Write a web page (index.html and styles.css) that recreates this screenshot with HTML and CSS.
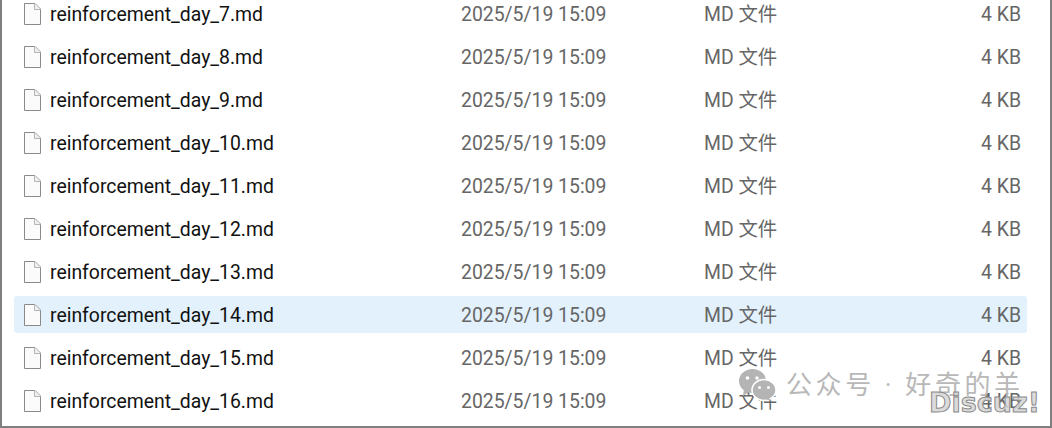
FILE: index.html
```html
<!DOCTYPE html>
<html lang="zh-CN">
<head>
  <meta charset="UTF-8">
  <title>文件列表</title>
  <link rel="stylesheet" href="styles.css">
</head>
<body>
  <div class="window">
    <div class="list">
      <div class="row">
        <svg class="file-icon" viewBox="0 0 18 22"><path d="M1.5 .5H12L17.500 6V21.500H1.500Z" fill="#fbfbfb" stroke="#8a8a8a"/><path d="M11.500 .5V6.500H17.500" fill="#f0f0f0" stroke="#b5b5b5"/></svg>
        <div class="cell name">reinforcement_day_7.md</div>
        <div class="cell date">2025/5/19 15:09</div>
        <div class="cell type">MD 文件</div>
        <div class="cell size">4 KB</div>
      </div>
      <div class="row">
        <svg class="file-icon" viewBox="0 0 18 22"><path d="M1.5 .5H12L17.500 6V21.500H1.500Z" fill="#fbfbfb" stroke="#8a8a8a"/><path d="M11.500 .5V6.500H17.500" fill="#f0f0f0" stroke="#b5b5b5"/></svg>
        <div class="cell name">reinforcement_day_8.md</div>
        <div class="cell date">2025/5/19 15:09</div>
        <div class="cell type">MD 文件</div>
        <div class="cell size">4 KB</div>
      </div>
      <div class="row">
        <svg class="file-icon" viewBox="0 0 18 22"><path d="M1.5 .5H12L17.500 6V21.500H1.500Z" fill="#fbfbfb" stroke="#8a8a8a"/><path d="M11.500 .5V6.500H17.500" fill="#f0f0f0" stroke="#b5b5b5"/></svg>
        <div class="cell name">reinforcement_day_9.md</div>
        <div class="cell date">2025/5/19 15:09</div>
        <div class="cell type">MD 文件</div>
        <div class="cell size">4 KB</div>
      </div>
      <div class="row">
        <svg class="file-icon" viewBox="0 0 18 22"><path d="M1.5 .5H12L17.500 6V21.500H1.500Z" fill="#fbfbfb" stroke="#8a8a8a"/><path d="M11.500 .5V6.500H17.500" fill="#f0f0f0" stroke="#b5b5b5"/></svg>
        <div class="cell name">reinforcement_day_10.md</div>
        <div class="cell date">2025/5/19 15:09</div>
        <div class="cell type">MD 文件</div>
        <div class="cell size">4 KB</div>
      </div>
      <div class="row">
        <svg class="file-icon" viewBox="0 0 18 22"><path d="M1.5 .5H12L17.500 6V21.500H1.500Z" fill="#fbfbfb" stroke="#8a8a8a"/><path d="M11.500 .5V6.500H17.500" fill="#f0f0f0" stroke="#b5b5b5"/></svg>
        <div class="cell name">reinforcement_day_11.md</div>
        <div class="cell date">2025/5/19 15:09</div>
        <div class="cell type">MD 文件</div>
        <div class="cell size">4 KB</div>
      </div>
      <div class="row">
        <svg class="file-icon" viewBox="0 0 18 22"><path d="M1.5 .5H12L17.500 6V21.500H1.500Z" fill="#fbfbfb" stroke="#8a8a8a"/><path d="M11.500 .5V6.500H17.500" fill="#f0f0f0" stroke="#b5b5b5"/></svg>
        <div class="cell name">reinforcement_day_12.md</div>
        <div class="cell date">2025/5/19 15:09</div>
        <div class="cell type">MD 文件</div>
        <div class="cell size">4 KB</div>
      </div>
      <div class="row">
        <svg class="file-icon" viewBox="0 0 18 22"><path d="M1.5 .5H12L17.500 6V21.500H1.500Z" fill="#fbfbfb" stroke="#8a8a8a"/><path d="M11.500 .5V6.500H17.500" fill="#f0f0f0" stroke="#b5b5b5"/></svg>
        <div class="cell name">reinforcement_day_13.md</div>
        <div class="cell date">2025/5/19 15:09</div>
        <div class="cell type">MD 文件</div>
        <div class="cell size">4 KB</div>
      </div>
      <div class="row selected">
        <svg class="file-icon" viewBox="0 0 18 22"><path d="M1.5 .5H12L17.500 6V21.500H1.500Z" fill="#fbfbfb" stroke="#8a8a8a"/><path d="M11.500 .5V6.500H17.500" fill="#f0f0f0" stroke="#b5b5b5"/></svg>
        <div class="cell name">reinforcement_day_14.md</div>
        <div class="cell date">2025/5/19 15:09</div>
        <div class="cell type">MD 文件</div>
        <div class="cell size">4 KB</div>
      </div>
      <div class="row">
        <svg class="file-icon" viewBox="0 0 18 22"><path d="M1.5 .5H12L17.500 6V21.500H1.500Z" fill="#fbfbfb" stroke="#8a8a8a"/><path d="M11.500 .5V6.500H17.500" fill="#f0f0f0" stroke="#b5b5b5"/></svg>
        <div class="cell name">reinforcement_day_15.md</div>
        <div class="cell date">2025/5/19 15:09</div>
        <div class="cell type">MD 文件</div>
        <div class="cell size">4 KB</div>
      </div>
      <div class="row">
        <svg class="file-icon" viewBox="0 0 18 22"><path d="M1.5 .5H12L17.500 6V21.500H1.500Z" fill="#fbfbfb" stroke="#8a8a8a"/><path d="M11.500 .5V6.500H17.500" fill="#f0f0f0" stroke="#b5b5b5"/></svg>
        <div class="cell name">reinforcement_day_16.md</div>
        <div class="cell date">2025/5/19 15:09</div>
        <div class="cell type">MD 文件</div>
        <div class="cell size">4 KB</div>
      </div>
    </div>

    <div class="watermark">
      <svg class="wechat" viewBox="0 0 38 32">
        <ellipse cx="14.500" cy="12" rx="13.500" ry="12" fill="#b4b4b4"/>
        <path d="M6 20L5 27L12 22Z" fill="#b4b4b4"/>
        <ellipse cx="26" cy="21" rx="12" ry="10.500" fill="#b4b4b4" stroke="#fff" stroke-width="1.500"/>
        <path d="M31 29L33 32L27 30Z" fill="#b4b4b4"/>
        <circle cx="9.500" cy="9" r="1.800" fill="#fff"/>
        <circle cx="19" cy="9" r="1.800" fill="#fff"/>
        <circle cx="21.500" cy="18.500" r="1.500" fill="#fff"/>
        <circle cx="30.500" cy="18.500" r="1.500" fill="#fff"/>
      </svg>
      <span class="wm-text">公众号 · 好奇的羊</span>
    </div>
    <div class="discuz">Discuz!</div>
  </div>
</body>
</html>
```

FILE: styles.css
```css
html, body {
  margin: 0;
  height: 100%;
}

body {
  font-family: "Roboto", "Noto Sans CJK SC", sans-serif;
  background-color: white;
  overflow: hidden;
}

.window {
  position: relative;
  box-sizing: border-box;
  width: 1052px;
  height: 428px;
  border-left: 2px solid #7f7f7f;
  border-right: 2px solid #7f7f7f;
  border-bottom: 2px solid #7f7f7f;
  overflow: hidden;
}

.list {
  margin-top: -5px;
  padding-left: 12px;
  display: flex;
  flex-direction: column;
  gap: 6px;
}

.row {
  width: 1013px;
  height: 37px;
  flex-shrink: 0;
  display: flex;
  align-items: center;
  border-radius: 3px;
  font-size: 19.4px;
  line-height: 24px;
  color: #666;
}

.selected {
  background-color: #e2f1fc;
}

.file-icon {
  width: 18px;
  height: 22px;
  margin-left: 9px;
  margin-right: 9px;
  flex-shrink: 0;
}

.cell {
  padding-top: 2px;
}

.name {
  width: 411px;
  color: #111;
}

.date {
  width: 243px;
}

.type {
  width: 240px;
}

.size {
  width: 77px;
  text-align: right;
}

.watermark {
  position: absolute;
  left: 736px;
  top: 369px;
  display: flex;
  align-items: flex-start;
  gap: 10px;
  color: #b8b8b8;
}

.wechat {
  width: 38px;
  height: 32px;
}

.wm-text {
  font-size: 26px;
  line-height: 32px;
  letter-spacing: 3.6px;
  white-space: nowrap;
}

.discuz {
  position: absolute;
  left: 927px;
  top: 387px;
  font-family: "DejaVu Sans", sans-serif;
  font-size: 27px;
  font-weight: bold;
  color: rgba(214, 214, 214, 0.9);
  -webkit-text-stroke: 1px #8a8a8a;
  white-space: nowrap;
}
```
